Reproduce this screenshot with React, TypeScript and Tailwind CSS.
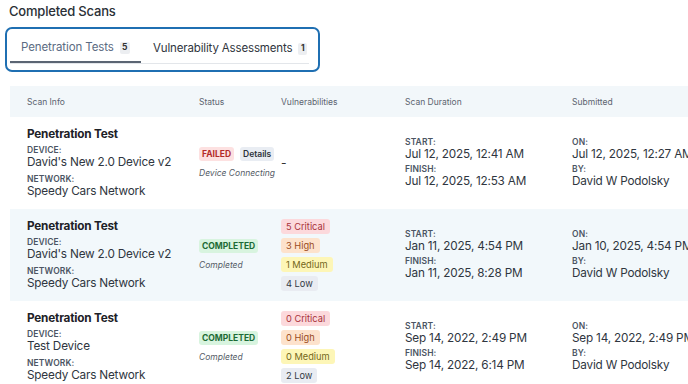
import React from "react";

type Vuln = { c: number; h: number; m: number; l: number } | null;
type Row = {
  device: string;
  network: string;
  status: "FAILED" | "COMPLETED";
  note: string;
  vulns: Vuln;
  start: string;
  finish: string;
  on: string;
  by: string;
  shaded?: boolean;
};

const rows: Row[] = [
  {
    device: "David's New 2.0 Device v2",
    network: "Speedy Cars Network",
    status: "FAILED",
    note: "Device Connecting",
    vulns: null,
    start: "Jul 12, 2025, 12:41 AM",
    finish: "Jul 12, 2025, 12:53 AM",
    on: "Jul 12, 2025, 12:27 AM",
    by: "David W Podolsky",
  },
  {
    device: "David's New 2.0 Device v2",
    network: "Speedy Cars Network",
    status: "COMPLETED",
    note: "Completed",
    vulns: { c: 5, h: 3, m: 1, l: 4 },
    start: "Jan 11, 2025, 4:54 PM",
    finish: "Jan 11, 2025, 8:28 PM",
    on: "Jan 10, 2025, 4:54 PM",
    by: "David W Podolsky",
    shaded: true,
  },
  {
    device: "Test Device",
    network: "Speedy Cars Network",
    status: "COMPLETED",
    note: "Completed",
    vulns: { c: 0, h: 0, m: 0, l: 2 },
    start: "Sep 14, 2022, 2:49 PM",
    finish: "Sep 14, 2022, 6:14 PM",
    on: "Sep 14, 2022, 2:49 PM",
    by: "David W Podolsky",
  },
];

const gridCols = "grid grid-cols-[172px_83px_124px_167px_220px]";

function Label({ children }: { children: React.ReactNode }) {
  return (
    <div className="text-[8.5px] font-semibold leading-[10px] tracking-[0.1px] text-[#4b5563] uppercase whitespace-nowrap">
      {children}
    </div>
  );
}

function Value({ children }: { children: React.ReactNode }) {
  return (
    <div className="text-[11.75px] leading-[15px] tracking-[-0.2px] text-[#2f3640] whitespace-nowrap">
      {children}
    </div>
  );
}

export default function App() {
  return (
    <div className="w-[688px] h-[384px] overflow-hidden bg-white font-['Inter',_sans-serif]">
      <div className="pl-[9px] pt-[2px] text-[13px] font-medium leading-[19px] tracking-[-0.2px] text-[#2a2f36]">
        Completed Scans
      </div>
      <div className="ml-[5px] mt-[6px] w-[315px] h-[45px] rounded-[7px] border-2 border-[#1f6fb2] pt-[5px] pl-[3px]">
        <div className="flex w-[299px] border-b border-[#e3e6ea]">
          <div className="flex h-[29px] w-[131px] shrink-0 items-center border-b-2 border-[#5b6573] -mb-px pl-[11px]">
            <span className="whitespace-nowrap text-[11.5px] tracking-[-0.1px] text-[#5b6b82]">Penetration Tests</span>
            <span className="ml-[6px] flex h-[12px] w-[10px] items-center justify-center rounded-[2px] bg-[#eceef1] text-[8.5px] font-bold text-[#333]">
              5
            </span>
          </div>
          <div className="flex h-[29px] items-center pl-[12px]">
            <span className="whitespace-nowrap text-[11.5px] tracking-[-0.15px] text-[#2f353d]">Vulnerability Assessments</span>
            <span className="ml-[6px] flex h-[12px] w-[9px] items-center justify-center rounded-[2px] bg-[#eceef1] text-[8.5px] font-bold text-[#333]">
              1
            </span>
          </div>
        </div>
      </div>

      <div className="ml-[10px] mt-[14px] w-[800px]">
        <div className={`${gridCols} h-[31px] items-center bg-[#f2f7fa] text-[8.5px] text-[#5c6470]`}>
          <div className="pl-[17px] pt-px">Scan Info</div>
          <div className="pl-[17px] pt-px">Status</div>
          <div className="pl-[16px] pt-px">Vulnerabilities</div>
          <div className="pl-[16px] pt-px">Scan Duration</div>
          <div className="pl-[16px] pt-px">Submitted</div>
        </div>
        {rows.map((r, i) => (
          <div
            key={i}
            className={`${gridCols} h-[92px] items-center ${r.shaded ? "bg-[#f2f8fb]" : "bg-white"}`}
          >
            <div className="pl-[17px] -mt-[1px]">
              <div className="text-[11.75px] font-bold leading-[16px] tracking-[-0.2px] text-[#1d2127]">
                Penetration Test
              </div>
              <div className="mt-[3px]">
                <Label>Device:</Label>
              </div>
              <Value>{r.device}</Value>
              <div className="mt-[4px]">
                <Label>Network:</Label>
              </div>
              <Value>{r.network}</Value>
            </div>
            <div className="pl-[17px]">
              <div className="flex items-center gap-[6px]">
                {r.status === "FAILED" ? (
                  <>
                    <span className="rounded-[3px] bg-[#fde1e1] px-[3px] py-[1px] text-[8.5px] font-bold leading-[12px] text-[#b32a2a]">
                      FAILED
                    </span>
                    <span className="rounded-[3px] bg-[#e9edf3] px-[3px] py-[1px] text-[8.5px] font-semibold leading-[12px] text-[#2c323a]">
                      Details
                    </span>
                  </>
                ) : (
                  <span className="rounded-[3px] bg-[#d8f4df] px-[3px] py-[1px] text-[8.5px] font-bold leading-[12px] text-[#1d6b35]">
                    COMPLETED
                  </span>
                )}
              </div>
              <div className="mt-[6px] whitespace-nowrap text-[8.5px] italic leading-[12px] text-[#555c66]">{r.note}</div>
            </div>
            <div className="pl-[16px]">
              {r.vulns ? (
                <div className="flex flex-col items-start gap-[3.7px]">
                  <span className="rounded-[3px] bg-[#fcd9dc] px-[5px] text-[9.25px] leading-[15px] text-[#a8323a]">
                    {r.vulns.c} Critical
                  </span>
                  <span className="rounded-[3px] bg-[#fde2cc] px-[5px] text-[9.25px] leading-[15px] text-[#9a4b1c]">
                    {r.vulns.h} High
                  </span>
                  <span className="rounded-[3px] bg-[#fdf6b7] px-[5px] text-[9.25px] leading-[15px] text-[#74661a]">
                    {r.vulns.m} Medium
                  </span>
                  <span className="rounded-[3px] bg-[#e9ecf2] px-[5px] text-[9.25px] leading-[15px] text-[#333a44]">
                    {r.vulns.l} Low
                  </span>
                </div>
              ) : (
                <div className="text-[12px] text-[#333]">-</div>
              )}
            </div>
            <div className="pl-[16px]">
              <Label>Start:</Label>
              <Value>{r.start}</Value>
              <div className="mt-[2px]">
                <Label>Finish:</Label>
              </div>
              <Value>{r.finish}</Value>
            </div>
            <div className="pl-[16px]">
              <Label>On:</Label>
              <Value>{r.on}</Value>
              <div className="mt-[2px]">
                <Label>By:</Label>
              </div>
              <Value>{r.by}</Value>
            </div>
          </div>
        ))}
      </div>
    </div>
  );
}
